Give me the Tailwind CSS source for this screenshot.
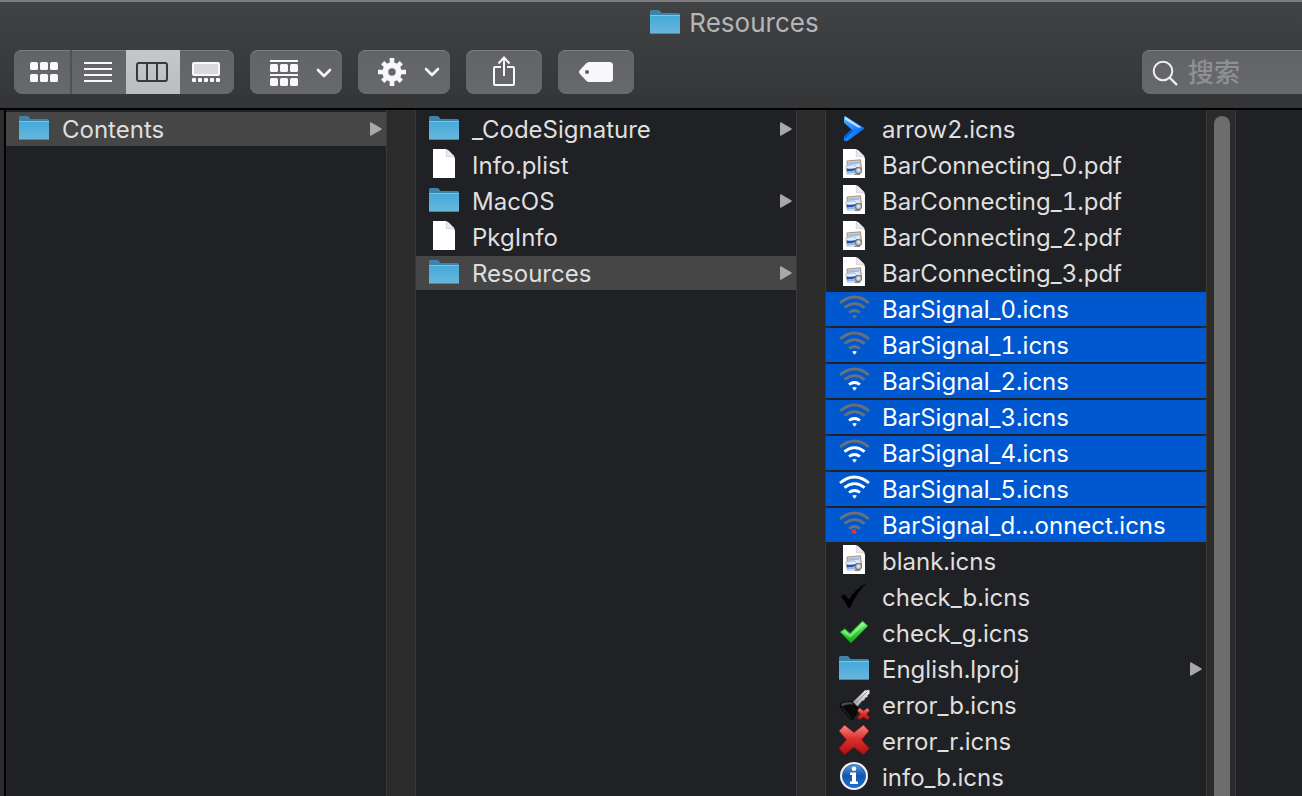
<!DOCTYPE html>
<html lang="zh">
<head>
<meta charset="utf-8">
<meta name="viewport" content="width=device-width, initial-scale=1">
<title>Resources</title>
<script src="https://cdn.jsdelivr.net/npm/@tailwindcss/browser@4"></script>
</head>
<body class="flex h-screen flex-col overflow-hidden bg-[#202124] font-['Inter','Noto_Sans_CJK_SC',sans-serif] text-2xl tabular-nums text-[#dfdfdf]">

<!-- Shared icon definitions -->
<svg class="absolute h-0 w-0" aria-hidden="true">
  <defs>
    <linearGradient id="gFolder" x1="0" y1="0" x2="0" y2="1"><stop offset="0" stop-color="#43a9da"/><stop offset="1" stop-color="#68b8dc"/></linearGradient>
    <linearGradient id="gArrow" x1="0" y1="0" x2="1" y2="1"><stop offset="0" stop-color="#5db4ff"/><stop offset=".5" stop-color="#1a86ff"/><stop offset="1" stop-color="#0058e0"/></linearGradient>
    <linearGradient id="gGreen" x1="0" y1="0" x2="0" y2="1"><stop offset="0" stop-color="#8df08a"/><stop offset=".5" stop-color="#35d43a"/><stop offset="1" stop-color="#12a81a"/></linearGradient>
    <linearGradient id="gRed" x1="0" y1="0" x2="0" y2="1"><stop offset="0" stop-color="#f58a86"/><stop offset=".45" stop-color="#dd3230"/><stop offset="1" stop-color="#b30d10"/></linearGradient>
    <linearGradient id="gInfo" x1="0" y1="0" x2="0" y2="1"><stop offset="0" stop-color="#5b93d8"/><stop offset=".5" stop-color="#1257b0"/><stop offset="1" stop-color="#1a72d2"/></linearGradient>
    <linearGradient id="gKey" x1="0" y1="1" x2="1" y2="0"><stop offset="0" stop-color="#9a9a9a"/><stop offset="1" stop-color="#f8f8f8"/></linearGradient>
  </defs>
  <symbol id="folder" viewBox="0 0 32 32">
    <path d="M1 4.500Q1 3 2.500 3H9Q10.200 3 11 4L12.500 6H29.500Q31 6 31 7.500V10H1Z" fill="#3f83a8"/>
    <path d="M1 8H31V25.500Q31 27 29.500 27H2.500Q1 27 1 25.500Z" fill="url(#gFolder)"/>
    <path d="M1 8.500H31" stroke="#74c8ee"/><path d="M1.500 26.500H30.500" stroke="#3f8db3"/>
  </symbol>
  <symbol id="doc" viewBox="0 0 32 32">
    <path d="M5 0H17.500Q19.500 .5 21 2L25.500 6.500Q27 8.500 27 10V29H5Z" fill="#fff"/>
    <path d="M18 .5V6.200Q18.300 8 20 8H26L25.500 6.500L20.500 1.500Z" fill="#e9e9ec"/>
    <path d="M18.300 1V7.700H26.500" fill="none" stroke="#d2d2d5" stroke-width=".8"/>
  </symbol>
  <symbol id="image" viewBox="0 0 32 32">
    <use href="#doc"/>
    <path d="M9 12L22.500 10.800L23.500 20L9.500 21Z" fill="#e6cdb2" stroke="#94775e" stroke-width=".8"/>
    <path d="M10.500 13.500L21.500 12.500L22 18L10.800 18.500Z" fill="#8dbdf2"/>
    <path d="M11 16L21.800 14.500L22 18L11 18.500Z" fill="#dcecfa"/>
    <path d="M7.800 17L17 16L22 24.800L9 25.300Z" fill="#e4ecf5" stroke="#9aa6b4" stroke-width=".5"/>
    <path d="M8.500 19.200Q13 20.500 19 18.500L20 21L9 22.800Z" fill="#2450a8"/>
    <path d="M9 22.800L20 21L20.500 23.500L9.500 24.500Z" fill="#93b6e0"/>
    <circle cx="20.500" cy="21.500" r="3.200" fill="#b4b9bd" stroke="#6b7075"/><circle cx="20.500" cy="21.300" r="1.500" fill="#e2e7ea"/>
    <path d="M16.500 25.200H22" stroke="#6b7075" stroke-width="1.200"/>
  </symbol>
  <symbol id="w1" viewBox="0 0 32 32"><path d="M14.100 22.800Q16.500 21.200 18.900 22.800L16.500 25.800Z" fill="currentColor"/></symbol>
  <symbol id="w2" viewBox="0 0 32 32"><path d="M11 19.500Q16.500 15.400 22 19.500" fill="none" stroke="currentColor" stroke-width="2.800"/></symbol>
  <symbol id="w3" viewBox="0 0 32 32"><path d="M6.400 14.600Q16.500 6.600 26.600 14.600" fill="none" stroke="currentColor" stroke-width="2.700"/></symbol>
  <symbol id="w4" viewBox="0 0 32 32"><path d="M2 10Q16.500 -2 31 10" fill="none" stroke="currentColor" stroke-width="2.700"/></symbol>
  <symbol id="arrow" viewBox="0 0 32 32">
    <path d="M7 3L26 14.800V16L9 28.200L6 27.500V23.500L13.500 16.500L6 9.500V4Z" fill="url(#gArrow)"/>
    <path d="M7.200 3.800L23.500 14.500H20L7 6.500Z" fill="#c4e3ff"/><path d="M6 23.500L13.500 16.500L16 17L7 26Z" fill="#0a58dd"/>
  </symbol>
  <symbol id="checkb" viewBox="0 0 32 32"><path d="M3 15.500L6.500 13.300L11 18.500Q18 7 28.800 2Q19 11 12 26.800H10Q7 20 3 15.500Z" fill="#000"/></symbol>
  <symbol id="checkg" viewBox="0 0 32 32">
    <path d="M2 15L6.800 11.500L12 16.300L24.500 4L30 8.800L13 26Z" fill="url(#gGreen)" stroke="#0d7d14" stroke-width=".8"/>
    <path d="M3.500 15L6.800 12.700L12 17.600L24.500 5.500L27 7.600L12.500 20.500Z" fill="#b6f7b0" opacity=".55"/>
  </symbol>
  <symbol id="cross" viewBox="0 0 32 32"><path d="M6.500 0L16 7.500L25.500 0L31 6L23.500 14.700L31 23.500L25.500 29.500L16 22L6.500 29.500L1 23.500L8.500 14.700L1 6Z" fill="url(#gRed)" stroke="#a51012" stroke-width=".7"/></symbol>
  <symbol id="key" viewBox="0 0 32 32">
    <path d="M14 14L27 1.200L31.500 1V4.500L29.500 6.500L29.500 8L27 9L26.500 11L24 12L19 18Z" fill="url(#gKey)" stroke="#777" stroke-width=".4"/>
    <path d="M16 15.500L29.500 2.500" stroke="#888" stroke-width=".9"/>
    <path d="M2 14Q7 11.500 14 12L20.500 18.500Q20 25 14.500 31Q12 31 9 27L2.500 19Q1 16 2 14Z" fill="#090909"/>
    <path d="M3 14.800Q8 12.600 13.600 13.200L16 15.600Q9 14.500 4 17.500Z" fill="#4a4a4a"/><path d="M4 18.500L13 29" stroke="#333" stroke-width="1"/>
    <svg x="19" y="19" width="13" height="13" viewBox="0 0 32 32"><use href="#cross"/></svg>
  </symbol>
  <symbol id="info" viewBox="0 0 32 32">
    <circle cx="16" cy="15" r="14" fill="#f1f1f3"/><circle cx="16" cy="15" r="11.600" fill="url(#gInfo)" stroke="#0d4a98" stroke-width=".6"/>
    <circle cx="16" cy="7.800" r="2.300" fill="#fff"/><path d="M12 11.500H18V20.500H20V23H12V20.500H14V14H12Z" fill="#fff"/>
  </symbol>
  <symbol id="tri" viewBox="0 0 12 14"><path d="M0 1.200Q0 -.2 1.400 .5L11.200 6.200Q12.400 7 11.200 7.800L1.400 13.500Q0 14.200 0 12.800Z" fill="#a8a8a8"/></symbol>
  <symbol id="down" viewBox="0 0 16 10"><path d="M2 2L8 8L14 2" fill="none" stroke="#f7f7f9" stroke-width="2.600" stroke-linecap="round" stroke-linejoin="round"/></symbol>
</svg>

<header class="shrink-0 border-t-2 border-b-2 border-t-[#7c7d80] border-b-black bg-linear-to-b from-[#414244] to-[#343537]">
  <h1 class="flex h-[42px] items-center justify-center gap-2 pl-[166px] text-[26px] font-normal text-[#b4b5b7]">
    <svg class="size-8 shrink-0"><use href="#folder"/></svg><span>Resources</span>
  </h1>
  <div class="flex gap-4 pt-1.5 pb-3.5 pl-3.5">
    <div class="flex h-11 overflow-hidden rounded-lg bg-linear-to-b from-[#626366] to-[#68696c] shadow-[inset_0_1px_0_#7c7d80]" role="group" aria-label="View">
      <button class="flex w-[58px] items-center justify-center border-r-2 border-[#505154] pl-1" aria-label="Icons">
        <svg width="28" height="20" viewBox="0 0 28 20" fill="#f8f8fa"><rect width="8" height="8" rx="1.500"/><rect x="10" width="8" height="8" rx="1.500"/><rect x="20" width="8" height="8" rx="1.500"/><rect y="12" width="8" height="8" rx="1.500"/><rect x="10" y="12" width="8" height="8" rx="1.500"/><rect x="20" y="12" width="8" height="8" rx="1.500"/></svg>
      </button>
      <button class="flex w-[54px] items-center justify-center pr-0.5" aria-label="List">
        <svg width="28" height="20" viewBox="0 0 28 20" fill="#f8f8fa"><path d="M0 0H28V2H0ZM0 6H28V8H0ZM0 12H28V14H0ZM0 18H28V20H0Z"/></svg>
      </button>
      <button class="flex w-[54px] items-center justify-center bg-linear-to-b from-[#c6c7c9] to-[#bcbdbf] pr-0.5" aria-label="Columns" aria-pressed="true">
        <svg width="32" height="20" viewBox="0 0 32 20" fill="none" stroke="#37383b" stroke-width="2"><rect x="1" y="1" width="30" height="18" rx="2"/><path d="M11 1V19M21 1V19"/></svg>
      </button>
      <button class="flex w-[54px] items-center justify-center pr-0.5" aria-label="Gallery">
        <svg width="28" height="20" viewBox="0 0 28 20" fill="#f8f8fa"><rect width="28" height="14" rx="2"/><rect x="2" y="2" width="24" height="10" fill="#d9dadc"/><rect y="16" width="4" height="4" rx="1"/><rect x="6" y="16" width="4" height="4" rx="1"/><rect x="12" y="16" width="4" height="4" rx="1"/><rect x="18" y="16" width="4" height="4" rx="1"/><rect x="24" y="16" width="4" height="4" rx="1"/></svg>
      </button>
    </div>
    <button class="flex h-11 w-[92px] items-center justify-between rounded-lg bg-linear-to-b from-[#626366] to-[#68696c] pt-0.5 pr-2.5 pl-5 shadow-[inset_0_1px_0_#7c7d80]" aria-label="Group">
      <svg width="28" height="26" viewBox="0 0 28 26" fill="#f8f8fa"><path d="M0 0H28V2H0ZM0 14H28V16H0Z"/><rect y="4" width="8" height="8" rx="1.500"/><rect x="10" y="4" width="8" height="8" rx="1.500"/><rect x="20" y="4" width="8" height="8" rx="1.500"/><rect y="18" width="8" height="8" rx="1.500"/><rect x="10" y="18" width="8" height="8" rx="1.500"/><rect x="20" y="18" width="8" height="8" rx="1.500"/></svg>
      <svg class="h-2.5 w-4"><use href="#down"/></svg>
    </button>
    <button class="flex h-11 w-[92px] items-center justify-between rounded-lg bg-linear-to-b from-[#626366] to-[#68696c] pr-2.5 pl-5 shadow-[inset_0_1px_0_#7c7d80]" aria-label="Actions">
      <svg width="28" height="28" viewBox="-14 -14 28 28"><g stroke="#f8f8fa" stroke-width="4.600"><path d="M0 -14V-6M0 14V6M-14 0H-6M14 0H6"/><path d="M-9.300 -9.300L-5 -5M9.300 -9.300L5 -5M-9.300 9.300L-5 5M9.300 9.300L5 5"/></g><circle r="6.700" fill="none" stroke="#f8f8fa" stroke-width="6"/></svg>
      <svg class="h-2.5 w-4"><use href="#down"/></svg>
    </button>
    <button class="flex h-11 w-[76px] items-center justify-center rounded-lg bg-linear-to-b from-[#626366] to-[#68696c] pb-0.5 shadow-[inset_0_1px_0_#7c7d80]" aria-label="Share">
      <svg width="22" height="30" viewBox="0 0 22 30" fill="none" stroke="#f8f8fa" stroke-width="2"><path d="M8 11H2Q1 11 1 12V28Q1 29 2 29H20Q21 29 21 28V12Q21 11 20 11H14M11 20V2M5.500 7.500L11 1.500L16.500 7.500"/></svg>
    </button>
    <button class="flex h-11 w-[76px] items-center justify-center rounded-lg bg-linear-to-b from-[#626366] to-[#68696c] shadow-[inset_0_1px_0_#7c7d80]" aria-label="Tags">
      <svg width="34" height="20" viewBox="0 0 34 20"><path d="M10 0H30.500Q34 0 34 3.500V16.500Q34 20 30.500 20H10Q8.500 20 7 18.500L1 12Q-1 10 1 8L7 1.500Q8.500 0 10 0Z" fill="#f8f8fa"/><circle cx="8" cy="10" r="2" fill="#606164"/></svg>
    </button>
    <label class="ml-auto flex h-11 w-40 items-center gap-2.5 rounded-l-lg bg-linear-to-b from-[#626366] to-[#68696c] pt-0.5 pl-2.5 shadow-[inset_0_1px_0_#7c7d80]">
      <svg class="shrink-0" width="26" height="26" viewBox="0 0 26 26" fill="none" stroke="#f0f0f2" stroke-width="2"><circle cx="11" cy="11" r="9.300"/><path d="M17.500 17.500L25 25" stroke-width="2.400"/></svg>
      <input class="w-full min-w-0 bg-transparent text-[26px] font-medium outline-none placeholder:text-[#8f9093]" type="text" placeholder="搜索" aria-label="搜索">
    </label>
  </div>
</header>

<main class="flex min-h-0 flex-1 border-l-4 border-[#2c2c2c]">
  <ul class="flex w-[382px] shrink-0 flex-col gap-0.5 overflow-hidden border-l-2 border-black pt-0.5">
    <li><a href="#" class="flex h-[34px] items-center gap-3 bg-[#464646] pr-1 pl-3"><svg class="size-8 shrink-0"><use href="#folder"/></svg><span class="flex-1 pt-0.5">Contents</span><svg class="h-3.5 w-3"><use href="#tri"/></svg></a></li>
  </ul>
  <div class="w-[30px] shrink-0 border-x border-[#393939] bg-[#2b2b2b]"></div>
  <ul class="flex w-[380px] shrink-0 flex-col gap-0.5 overflow-hidden pt-0.5">
    <li><a href="#" class="flex h-[34px] items-center gap-3 pr-1 pl-3"><svg class="size-8 shrink-0"><use href="#folder"/></svg><span class="flex-1 pt-0.5">_CodeSignature</span><svg class="h-3.5 w-3"><use href="#tri"/></svg></a></li>
    <li><a href="#" class="flex h-[34px] items-center gap-3 pr-1 pl-3"><svg class="size-8 shrink-0"><use href="#doc"/></svg><span class="flex-1 pt-0.5">Info.plist</span></a></li>
    <li><a href="#" class="flex h-[34px] items-center gap-3 pr-1 pl-3"><svg class="size-8 shrink-0"><use href="#folder"/></svg><span class="flex-1 pt-0.5">MacOS</span><svg class="h-3.5 w-3"><use href="#tri"/></svg></a></li>
    <li><a href="#" class="flex h-[34px] items-center gap-3 pr-1 pl-3"><svg class="size-8 shrink-0"><use href="#doc"/></svg><span class="flex-1 pt-0.5">PkgInfo</span></a></li>
    <li><a href="#" class="flex h-[34px] items-center gap-3 bg-[#464646] pr-1 pl-3"><svg class="size-8 shrink-0"><use href="#folder"/></svg><span class="flex-1 pt-0.5">Resources</span><svg class="h-3.5 w-3"><use href="#tri"/></svg></a></li>
  </ul>
  <div class="w-[30px] shrink-0 border-x border-[#393939] bg-[#2b2b2b]"></div>
  <ul class="flex w-[380px] shrink-0 flex-col gap-0.5 overflow-hidden pt-0.5">
    <li><a href="#" class="flex h-[34px] items-center gap-3 pr-1 pl-3"><svg class="size-8 shrink-0"><use href="#arrow"/></svg><span class="flex-1 pt-0.5">arrow2.icns</span></a></li>
    <li><a href="#" class="flex h-[34px] items-center gap-3 pr-1 pl-3"><svg class="size-8 shrink-0"><use href="#image"/></svg><span class="flex-1 pt-0.5">BarConnecting_0.pdf</span></a></li>
    <li><a href="#" class="flex h-[34px] items-center gap-3 pr-1 pl-3"><svg class="size-8 shrink-0"><use href="#image"/></svg><span class="flex-1 pt-0.5">BarConnecting_1.pdf</span></a></li>
    <li><a href="#" class="flex h-[34px] items-center gap-3 pr-1 pl-3"><svg class="size-8 shrink-0"><use href="#image"/></svg><span class="flex-1 pt-0.5">BarConnecting_2.pdf</span></a></li>
    <li><a href="#" class="flex h-[34px] items-center gap-3 pr-1 pl-3"><svg class="size-8 shrink-0"><use href="#image"/></svg><span class="flex-1 pt-0.5">BarConnecting_3.pdf</span></a></li>
    <li><a href="#" class="flex h-[34px] items-center gap-3 bg-[#0058d0] pr-1 pl-3 text-white"><svg class="size-8 shrink-0 text-[#6b6f76]"><use href="#w1"/><use href="#w2"/><use href="#w3"/><use href="#w4"/></svg><span class="flex-1 pt-0.5">BarSignal_0.icns</span></a></li>
    <li><a href="#" class="flex h-[34px] items-center gap-3 bg-[#0058d0] pr-1 pl-3 text-white"><svg class="size-8 shrink-0 text-[#6b6f76]"><use class="text-white" href="#w1"/><use href="#w2"/><use href="#w3"/><use href="#w4"/></svg><span class="flex-1 pt-0.5">BarSignal_1.icns</span></a></li>
    <li><a href="#" class="flex h-[34px] items-center gap-3 bg-[#0058d0] pr-1 pl-3 text-white"><svg class="size-8 shrink-0 text-[#6b6f76]"><use class="text-white" href="#w1"/><use class="text-white" href="#w2"/><use href="#w3"/><use href="#w4"/></svg><span class="flex-1 pt-0.5">BarSignal_2.icns</span></a></li>
    <li><a href="#" class="flex h-[34px] items-center gap-3 bg-[#0058d0] pr-1 pl-3 text-white"><svg class="size-8 shrink-0 text-[#6b6f76]"><use class="text-white" href="#w1"/><use class="text-white" href="#w2"/><use href="#w3"/><use href="#w4"/></svg><span class="flex-1 pt-0.5">BarSignal_3.icns</span></a></li>
    <li><a href="#" class="flex h-[34px] items-center gap-3 bg-[#0058d0] pr-1 pl-3 text-white"><svg class="size-8 shrink-0 text-[#6b6f76]"><use class="text-white" href="#w1"/><use class="text-white" href="#w2"/><use class="text-white" href="#w3"/><use href="#w4"/></svg><span class="flex-1 pt-0.5">BarSignal_4.icns</span></a></li>
    <li><a href="#" class="flex h-[34px] items-center gap-3 bg-[#0058d0] pr-1 pl-3 text-white"><svg class="size-8 shrink-0 text-white"><use href="#w1"/><use href="#w2"/><use href="#w3"/><use href="#w4"/></svg><span class="flex-1 pt-0.5">BarSignal_5.icns</span></a></li>
    <li><a href="#" class="flex h-[34px] items-center gap-3 bg-[#0058d0] pr-1 pl-3 text-white"><svg class="size-8 shrink-0 text-[#6b6f76]"><use href="#w2"/><use href="#w3"/><use href="#w4"/><path d="M14 20.500L18 24.500M18 20.500L14 24.500" stroke="#ee3b32" stroke-width="1.600"/></svg><span class="flex-1 pt-0.5">BarSignal_d...onnect.icns</span></a></li>
    <li><a href="#" class="flex h-[34px] items-center gap-3 pr-1 pl-3"><svg class="size-8 shrink-0"><use href="#image"/></svg><span class="flex-1 pt-0.5">blank.icns</span></a></li>
    <li><a href="#" class="flex h-[34px] items-center gap-3 pr-1 pl-3"><svg class="size-8 shrink-0"><use href="#checkb"/></svg><span class="flex-1 pt-0.5">check_b.icns</span></a></li>
    <li><a href="#" class="flex h-[34px] items-center gap-3 pr-1 pl-3"><svg class="size-8 shrink-0"><use href="#checkg"/></svg><span class="flex-1 pt-0.5">check_g.icns</span></a></li>
    <li><a href="#" class="flex h-[34px] items-center gap-3 pr-1 pl-3"><svg class="size-8 shrink-0"><use href="#folder"/></svg><span class="flex-1 pt-0.5">English.lproj</span><svg class="h-3.5 w-3"><use href="#tri"/></svg></a></li>
    <li><a href="#" class="flex h-[34px] items-center gap-3 pr-1 pl-3"><svg class="size-8 shrink-0"><use href="#key"/></svg><span class="flex-1 pt-0.5">error_b.icns</span></a></li>
    <li><a href="#" class="flex h-[34px] items-center gap-3 pr-1 pl-3"><svg class="size-8 shrink-0"><use href="#cross"/></svg><span class="flex-1 pt-0.5">error_r.icns</span></a></li>
    <li><a href="#" class="flex h-[34px] items-center gap-3 pr-1 pl-3"><svg class="size-8 shrink-0"><use href="#info"/></svg><span class="flex-1 pt-0.5">info_b.icns</span></a></li>
  </ul>
  <div class="flex w-[30px] shrink-0 justify-center border-x border-[#393939] bg-[#2b2b2b] pt-1.5 pl-0.5"><div class="w-4 rounded-t-full bg-[#6c6c6c]"></div></div>
</main>
</body>
</html>
